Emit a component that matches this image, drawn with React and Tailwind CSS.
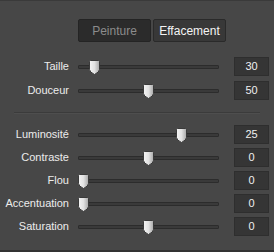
const rows1 = [
  { label: "Taille", value: 30, pos: 10 },
  { label: "Douceur", value: 50, pos: 64 },
];

const rows2 = [
  { label: "Luminosité", value: 25, pos: 97 },
  { label: "Contraste", value: 0, pos: 64 },
  { label: "Flou", value: 0, pos: -1 },
  { label: "Accentuation", value: 0, pos: -1 },
  { label: "Saturation", value: 0, pos: 64 },
];

const Thumb = () => (
  <svg width="11" height="15" viewBox="0 0 11 15">
    <defs>
      <linearGradient id="tg" x1="0" y1="0" x2="1" y2="0">
        <stop offset="0" stopColor="#f4f4f4" />
        <stop offset="0.5" stopColor="#e2e2e2" />
        <stop offset="1" stopColor="#a8a8a8" />
      </linearGradient>
    </defs>
    <path
      d="M1.5 0.5 H9.5 Q10.5 0.5 10.5 1.5 V9.5 Q10.5 12 5.5 14.5 Q0.5 12 0.5 9.5 V1.5 Q0.5 0.5 1.5 0.5 Z"
      fill="url(#tg)"
      stroke="#3a3a3a"
      strokeWidth="1"
    />
  </svg>
);

const Row = ({ label, value, pos }) => (
  <div className="flex h-[19px] items-center">
    <div className="w-[69px] text-right text-[11px] text-[#ececec]">{label}</div>
    <div className="relative ml-[9px] h-[4px] w-[141px] rounded-[1px] border border-[#2c2c2c] bg-[#3a3a3a]">
      <div className="absolute top-[-6px]" style={{ left: pos }}>
        <Thumb />
      </div>
    </div>
    <div className="ml-[15px] flex h-[19px] w-[35px] items-center justify-center border border-[#2e2e2e] bg-[#353535] text-[11px] text-[#f0f0f0]">
      {value}
    </div>
  </div>
);

export default function App() {
  return (
    <div
      className="h-[252px] w-[274px] overflow-hidden border-t border-b-[2px] border-t-[#3a3a3a] border-b-[#333] bg-[#474747]"
      style={{ fontFamily: "'Liberation Sans', Arial, sans-serif" }}
    >
      <div className="flex gap-[2px] pl-[78px] pt-[18px]">
        <div className="flex h-[23px] w-[73px] items-center justify-center rounded-[2px] border border-[#242424] bg-[#2b2b2b] text-[12px] text-[#8c8c8c]">
          Peinture
        </div>
        <div className="flex h-[23px] w-[73px] items-center justify-center rounded-[2px] border border-[#2a2a2a] bg-[#383838] text-[12px] text-[#f4f4f4]">
          Effacement
        </div>
      </div>
      <div className="mt-[15px] flex flex-col gap-[5px]">
        {rows1.map((r) => (
          <Row key={r.label} {...r} />
        ))}
      </div>
      <div className="mx-[14px] mt-[12px] h-[2px] border-t border-b border-t-[#3b3b3b] border-b-[#4e4e4e]" />
      <div className="mt-[11px] flex flex-col gap-[4px]">
        {rows2.map((r) => (
          <Row key={r.label} {...r} />
        ))}
      </div>
    </div>
  );
}
